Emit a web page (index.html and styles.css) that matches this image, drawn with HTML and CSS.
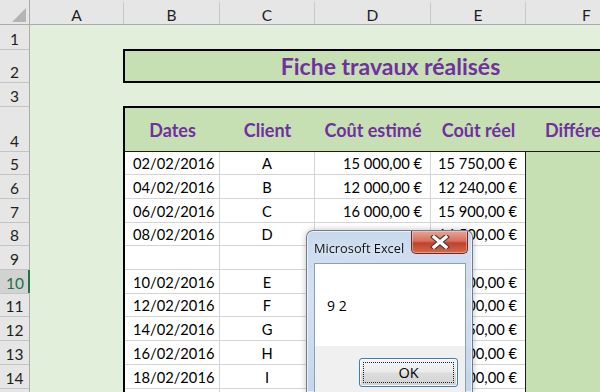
FILE: index.html
```html
<!DOCTYPE html>
<html lang="fr">
<head>
<meta charset="utf-8">
<title>Fiche travaux réalisés</title>
<link rel="stylesheet" href="styles.css">
</head>
<body>
<div class="sheet">
  <div class="corner"><span class="corner-tri"></span></div>

  <div class="colheads">
    <div class="colhead col-a">A</div>
    <div class="colhead col-b">B</div>
    <div class="colhead col-c">C</div>
    <div class="colhead col-d">D</div>
    <div class="colhead col-e">E</div>
    <div class="colhead col-f">F</div>
  </div>

  <div class="rowheads">
    <div class="rowhead h25">1</div>
    <div class="rowhead h33">2</div>
    <div class="rowhead h24">3</div>
    <div class="rowhead h45">4</div>
    <div class="rowhead h23">5</div>
    <div class="rowhead h24">6</div>
    <div class="rowhead h24">7</div>
    <div class="rowhead h23">8</div>
    <div class="rowhead h24">9</div>
    <div class="rowhead h24 is-selected">10</div>
    <div class="rowhead h23">11</div>
    <div class="rowhead h24">12</div>
    <div class="rowhead h24">13</div>
    <div class="rowhead h24">14</div>
    <div class="rowhead h24">15</div>
  </div>

  <div class="cells">
    <div class="title">Fiche travaux réalisés</div>

    <div class="table">
      <div class="th">Dates</div>
      <div class="th">Client</div>
      <div class="th">Coût estimé</div>
      <div class="th">Coût réel</div>
      <div class="th">Différence</div>

      <div class="td date">02/02/2016</div><div class="td mid">A</div><div class="td num">15 000,00 €</div><div class="td num">15 750,00 €</div><div class="td diff"></div>
      <div class="td date">04/02/2016</div><div class="td mid">B</div><div class="td num">12 000,00 €</div><div class="td num">12 240,00 €</div><div class="td diff"></div>
      <div class="td date">06/02/2016</div><div class="td mid">C</div><div class="td num">16 000,00 €</div><div class="td num">15 900,00 €</div><div class="td diff"></div>
      <div class="td date">08/02/2016</div><div class="td mid">D</div><div class="td num"></div><div class="td num">14 500,00 €</div><div class="td diff"></div>
      <div class="td date"></div><div class="td mid"></div><div class="td num"></div><div class="td num"></div><div class="td diff"></div>
      <div class="td date">10/02/2016</div><div class="td mid">E</div><div class="td num"></div><div class="td num">11 400,00 €</div><div class="td diff"></div>
      <div class="td date">12/02/2016</div><div class="td mid">F</div><div class="td num"></div><div class="td num">12 800,00 €</div><div class="td diff"></div>
      <div class="td date">14/02/2016</div><div class="td mid">G</div><div class="td num"></div><div class="td num">17 650,00 €</div><div class="td diff"></div>
      <div class="td date">16/02/2016</div><div class="td mid">H</div><div class="td num"></div><div class="td num">10 300,00 €</div><div class="td diff"></div>
      <div class="td date">18/02/2016</div><div class="td mid">I</div><div class="td num"></div><div class="td num">13 900,00 €</div><div class="td diff"></div>
      <div class="td date"></div><div class="td mid"></div><div class="td num"></div><div class="td num"></div><div class="td diff"></div>
    </div>
  </div>
</div>

<div class="msgbox">
  <div class="msgbox-bar">
    <span class="msgbox-title">Microsoft Excel</span>
    <span class="msgbox-close">
      <svg width="20" height="14" viewBox="0 0 20 14">
        <path d="M4 2 L16 12 M16 2 L4 12" stroke="#4a3a3a" stroke-width="5.5" stroke-linecap="square"/>
        <path d="M4 2 L16 12 M16 2 L4 12" stroke="#ffffff" stroke-width="3.2" stroke-linecap="square"/>
      </svg>
    </span>
  </div>
  <div class="msgbox-client">
    <div class="msgbox-body">9 2</div>
    <div class="msgbox-foot">
      <span class="msgbox-ok"><span class="msgbox-ok-focus">OK</span></span>
    </div>
  </div>
</div>
</body>
</html>
```

FILE: styles.css
```css
* { box-sizing: border-box; }

html, body {
  margin: 0;
  padding: 0;
  width: 600px;
  height: 392px;
  overflow: hidden;
  background: #e2efda;
}

.sheet {
  display: grid;
  grid-template-columns: 30px 618px;
  grid-template-rows: 25px 367px;
  font-family: Lato, "Liberation Sans", sans-serif;
  font-size: 14.7px;
  color: #000;
  overflow: hidden;
}

/* header strip */
.corner {
  position: relative;
  background: #e6e6e6;
  border-right: 1px solid #ababab;
  border-bottom: 1px solid #ababab;
}
.corner-tri {
  position: absolute;
  right: 3px;
  bottom: 2px;
  width: 0;
  height: 0;
  border-left: 14px solid transparent;
  border-bottom: 14px solid #b4b4b4;
}

.colheads {
  display: flex;
  background: #e6e6e6;
  border-bottom: 1px solid #ababab;
}
.colhead {
  display: flex;
  align-items: center;
  justify-content: center;
  padding-top: 1px;
  font-size: 15.5px;
  color: #1e1e1e;
  border-right: 1px solid #c8c8c8;
  border-top: 4px solid #e6e6e6;
  background: #e6e6e6;
}
.col-a { width: 94px; }
.col-b { width: 96px; }
.col-c { width: 95px; }
.col-d { width: 116px; }
.col-e { width: 95px; }
.col-f { width: 122px; }

.rowheads {
  display: flex;
  flex-direction: column;
  background: #e6e6e6;
  border-right: 1px solid #ababab;
}
.rowhead {
  flex: none;
  display: flex;
  align-items: flex-end;
  justify-content: center;
  padding-bottom: 1px;
  font-size: 15.5px;
  color: #1e1e1e;
  border-bottom: 1px solid #c4c4c4;
}
.rowhead.is-selected {
  background: #d2d2d2;
  color: #217346;
  box-shadow: inset -2px 0 0 #217346;
  margin-right: -1px;
}
.h23 { height: 23px; }
.h24 { height: 24px; }
.h25 { height: 25px; }
.h33 { height: 33px; }
.h45 { height: 45px; }

/* worksheet body */
.cells {
  display: grid;
  grid-template-columns: 94px 96px 95px 116px 95px 122px;
  grid-template-rows: 25px 33px 24px 45px 1fr;
}

.title {
  grid-column: 2 / -1;
  grid-row: 2;
  margin: -1px 0 0 -1px;
  border: 2px solid #000;
  border-right: none;
  background: #c6e0b4;
  color: #7030a0;
  font-weight: 700;
  font-size: 23px;
  display: flex;
  align-items: center;
  justify-content: center;
  padding-left: 8px;
}

.table {
  grid-column: 2 / -1;
  grid-row: 4 / -1;
  margin: -1px 0 0 -1px;
  border-left: 2px solid #000;
  border-top: 2px solid #000;
  display: grid;
  grid-template-columns: 95px 95px 116px 95px 1fr;
  grid-template-rows: 44px 23px 24px 24px 23px 24px 24px 23px 24px 24px 24px 24px;
}

.th {
  background: #c6e0b4;
  border-bottom: 1px solid #1a1a1a;
  color: #7030a0;
  font-weight: 700;
  font-size: 18px;
  display: flex;
  align-items: center;
  justify-content: center;
  padding-top: 1px;
  white-space: nowrap;
  overflow: hidden;
}

.td {
  background: #fff;
  border-right: 1px solid #d4d4d4;
  border-bottom: 1px solid #d4d4d4;
  display: flex;
  align-items: flex-end;
  padding-bottom: 2px;
  white-space: nowrap;
}
.date { padding-left: 8px; }
.mid { justify-content: center; }
.num { justify-content: flex-end; padding-right: 8px; }
.diff {
  background: #c6e0b4;
  border: none;
  border-left: 1px solid #1a1a1a;
  margin-left: -1px;
}

/* message box window, over the sheet */
.msgbox {
  position: absolute;
  left: 306px;
  top: 230px;
  width: 167px;
  height: 162px;
  padding: 0 6px 0 7px;
  border: 1px solid #6f7c8c;
  border-bottom: none;
  border-radius: 7px 7px 0 0;
  background: linear-gradient(180deg, rgba(198, 215, 236, 0.95) 0%, rgba(210, 224, 241, 0.96) 40%, rgba(195, 213, 236, 0.97) 100%);
  backdrop-filter: blur(3px);
  box-shadow: 0 0 6px rgba(0, 0, 0, 0.25), inset 0 0 0 1px rgba(255, 255, 255, 0.6);
  font-family: "Open Sans", "Noto Sans", sans-serif;
  font-size: 12.8px;
  color: #000;
  overflow: hidden;
}
.msgbox-bar {
  position: relative;
  height: 32px;
  display: flex;
  align-items: center;
  padding-top: 2px;
}
.msgbox-title {
  color: #111;
  white-space: nowrap;
  text-shadow: 0 0 6px rgba(255, 255, 255, 0.9);
}
.msgbox-close {
  position: absolute;
  left: 97px;
  top: 0;
  width: 57px;
  height: 23px;
  border: 1px solid #6b2a22;
  border-top: none;
  border-radius: 0 0 5px 5px;
  background: linear-gradient(180deg, #e9a396 0%, #d7705f 45%, #c2402a 55%, #cf6b4f 100%);
  box-shadow: inset 0 0 0 1px rgba(255, 220, 210, 0.45);
  display: flex;
  align-items: center;
  justify-content: center;
}
.msgbox-client {
  border: 1px solid #8d9fb6;
  background: #f0f0f0;
  height: 140px;
}
.msgbox-body {
  background: #fff;
  height: 82px;
  padding: 33px 0 0 12px;
  line-height: 18px;
  font-size: 14px;
}
.msgbox-foot {
  padding: 12px 0 0 44px;
}
.msgbox-ok {
  display: flex;
  width: 99px;
  height: 29px;
  padding: 3px;
  border: 1px solid #3c7fb1;
  border-radius: 3px;
  background: linear-gradient(180deg, #f6f6f6 0%, #ebebeb 48%, #dddddd 52%, #d2d2d2 100%);
  box-shadow: inset 0 0 0 1px rgba(255, 255, 255, 0.8);
}
.msgbox-ok-focus {
  flex: 1;
  display: flex;
  align-items: center;
  justify-content: center;
  border: 1px dotted #222;
  font-size: 14.5px;
}
```
